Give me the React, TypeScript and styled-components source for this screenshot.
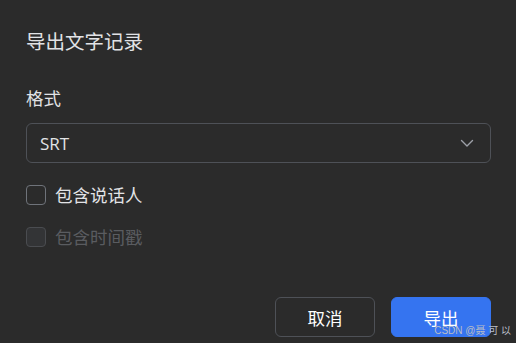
import React from 'react'
import styled, { createGlobalStyle } from 'styled-components'

const GlobalStyle = createGlobalStyle`
    html, body {
        margin: 0;
        padding: 0;
        background: #2b2b2b;
    }
    body {
        font-family: "Noto Sans CJK SC", "Noto Sans", sans-serif;
    }
`

const Dialog = styled.div`
    position: relative;
    box-sizing: border-box;
    width: 516px;
    height: 343px;
    padding: 26px 25px 0 26px;
    background: #2b2b2b;
    color: #e2e3e6;
    display: flex;
    flex-direction: column;
`

const Title = styled.h1`
    margin: 0;
    font-size: 19.5px;
    font-weight: 400;
    line-height: 30px;
`

const Label = styled.div`
    margin-top: 30px;
    font-size: 17.5px;
    line-height: 24px;
`

const Select = styled.div`
    margin-top: 13px;
    box-sizing: border-box;
    height: 40px;
    border: 1px solid #4e5157;
    border-radius: 6px;
    display: flex;
    align-items: center;
    justify-content: space-between;
    padding: 0 16px 0 13px;
    font-family: "Open Sans", "Noto Sans", sans-serif;
    font-size: 17px;
    font-weight: 500;
    color: #e2e3e6;
`

const Options = styled.div`
    margin-top: 20px;
    display: flex;
    flex-direction: column;
    gap: 18px;
`

const CheckRow = styled.label<{ disabled?: boolean }>`
    display: flex;
    align-items: center;
    gap: 9px;
    font-size: 17.5px;
    line-height: 24px;
    color: ${({ disabled }) => (disabled ? '#5a5c60' : '#e2e3e6')};
`

const Box = styled.span<{ disabled?: boolean }>`
    box-sizing: border-box;
    width: 20px;
    height: 20px;
    border-radius: 4px;
    border: 1px solid ${({ disabled }) => (disabled ? '#4a4c50' : '#6f737a')};
    background: ${({ disabled }) => (disabled ? '#333436' : 'transparent')};
`

const Footer = styled.div`
    margin-top: auto;
    margin-bottom: 6px;
    display: flex;
    justify-content: flex-end;
    gap: 16px;
`

const Button = styled.button<{ primary?: boolean }>`
    box-sizing: border-box;
    width: 100px;
    height: 40px;
    border-radius: 6px;
    font-family: "Noto Sans CJK SC", sans-serif;
    font-size: 17.5px;
    color: #ffffff;
    border: 1px solid ${({ primary }) => (primary ? '#3574f0' : '#4e5157')};
    background: ${({ primary }) => (primary ? '#3574f0' : 'transparent')};
    cursor: pointer;
`

const Watermark = styled.span`
    position: absolute;
    right: 5px;
    bottom: 6px;
    font-family: "Liberation Sans", "Noto Sans CJK SC", sans-serif;
    font-size: 10px;
    line-height: 12px;
    color: #b9bdc6;
`

export default function App() {
    return (
        <>
            <GlobalStyle />
            <Dialog>
                <Title>导出文字记录</Title>
                <Label>格式</Label>
                <Select>
                    <span>SRT</span>
                    <svg width="14" height="14" viewBox="0 0 14 14" fill="none">
                        <path d="M1.5 4.5l5.5 5.5L12.5 4.5" stroke="#9da0a8" strokeWidth="1.4" strokeLinecap="round" strokeLinejoin="round" />
                    </svg>
                </Select>
                <Options>
                    <CheckRow>
                        <Box />
                        包含说话人
                    </CheckRow>
                    <CheckRow disabled>
                        <Box disabled />
                        包含时间戳
                    </CheckRow>
                </Options>
                <Footer>
                    <Button>取消</Button>
                    <Button primary>导出</Button>
                </Footer>
                <Watermark>CSDN @聂 可 以</Watermark>
            </Dialog>
        </>
    )
}
